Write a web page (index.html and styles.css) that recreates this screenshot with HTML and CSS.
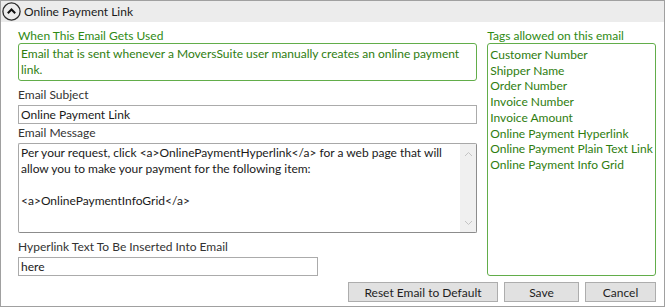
FILE: index.html
```
<html lang="en">
<head>
  <meta charset="UTF-8" />
  <title>Online Payment Link</title>
  <link rel="stylesheet" href="styles.css">
</head>
<body>

<div class="panel">
  <div class="panel_header">
    <span class="toggle">
      <svg width="19" height="19" viewBox="0 0 19 19">
        <circle cx="9.5" cy="9.5" r="8.6" fill="none" stroke="#2a2a2a" stroke-width="1.3"/>
        <path d="M5.8 11.2 L9.5 7.5 L13.2 11.2" fill="none" stroke="#111" stroke-width="2"/>
      </svg>
    </span>
    <span class="header_title">Online Payment Link</span>
  </div>

  <div class="panel_body">
    <div class="columns">
      <div class="left_col">
        <div class="green_label">When This Email Gets Used</div>
        <div class="green_box usage_box">Email that is sent whenever a MoversSuite user manually creates an online payment<br>link.</div>

        <div class="field_label">Email Subject</div>
        <div class="text_input">Online Payment Link</div>

        <div class="field_label msg_label">Email Message</div>
        <div class="text_area">
          <div class="text_area_content">Per your request, click &lt;a&gt;OnlinePaymentHyperlink&lt;/a&gt; for a web page that will<br>allow you to make your payment for the following item:<br><br>&lt;a&gt;OnlinePaymentInfoGrid&lt;/a&gt;</div>
          <div class="scrollbar">
            <svg width="9" height="6" viewBox="0 0 9 6"><path d="M1 5 L4.5 1.5 L8 5" fill="none" stroke="#c4c4c4" stroke-width="1"/></svg>
            <svg width="9" height="6" viewBox="0 0 9 6"><path d="M1 1 L4.5 4.5 L8 1" fill="none" stroke="#c4c4c4" stroke-width="1"/></svg>
          </div>
        </div>

        <div class="field_label">Hyperlink Text To Be Inserted Into Email</div>
        <div class="text_input short_input">here</div>
      </div>

      <div class="right_col">
        <div class="green_label">Tags allowed on this email</div>
        <div class="green_box tags_box">
          <div>Customer Number</div>
          <div>Shipper Name</div>
          <div>Order Number</div>
          <div>Invoice Number</div>
          <div>Invoice Amount</div>
          <div>Online Payment Hyperlink</div>
          <div>Online Payment Plain Text Link</div>
          <div>Online Payment Info Grid</div>
        </div>
      </div>
    </div>

    <div class="actions">
      <button class="btn btn_reset">Reset Email to Default</button>
      <button class="btn btn_save">Save</button>
      <button class="btn btn_cancel">Cancel</button>
    </div>
  </div>
</div>

</body>
</html>
```

FILE: styles.css
```
*{box-sizing:border-box; margin:0; padding:0;}
body{width:665px; height:308px; background:#fff; color:#1e1e1e;
     font-family:Lato, "Noto Sans", sans-serif; font-size:12px;}

.panel{height:307px; border:1px solid #a0a0a0; display:flex; flex-direction:column;}
.panel_header{height:21px; background:#ececec; display:flex; align-items:center; padding-left:1px;}
.toggle{width:19px; height:19px; display:flex; margin-right:3px;}
.header_title{font-size:12px; color:#1a1a1a;}

.panel_body{flex:1; display:flex; flex-direction:column; padding:6px 8px 0 17px;}
.columns{display:flex; gap:10px; height:248px;}
.left_col{width:460px; display:flex; flex-direction:column;}
.right_col{width:169px; display:flex; flex-direction:column;}

.green_label{height:15px; line-height:15px; color:#2f8a14; white-space:nowrap;}
.green_box{border:1px solid #62ad4a; border-radius:3px; color:#2f7d10;}
.usage_box{height:38px; padding:2px 2px; line-height:16px; white-space:nowrap;}
.tags_box{flex:1; padding:3px 2px; line-height:15.7px; white-space:nowrap;}

.field_label{height:16px; line-height:16px; margin-top:6px; margin-bottom:2px; color:#333;}
.msg_label{margin-top:1px;}

.text_input{height:19px; line-height:17px; border:1px solid #ababab; padding:0 2px; color:#1a1a1a;}
.short_input{width:300px;}

.text_area{height:90px; display:flex; border:1px solid #a8a8a8; border-right-color:#8c8c8c;
           border-bottom-color:#8c8c8c; border-radius:2px;}
.text_area_content{flex:1; padding:1px 2px; line-height:16px; white-space:nowrap; color:#1a1a1a;}
.scrollbar{width:16px; background:#f0f0f0; display:flex; flex-direction:column;
           justify-content:space-between; align-items:center; padding:7px 0 6px;}

.actions{display:flex; justify-content:flex-end; gap:6px; margin-top:6px;}
.btn{height:20px; background:#e1e1e1; border:1px solid #adadad; font-family:inherit;
     font-size:12px; color:#1e1e1e;}
.btn_reset{width:150px;}
.btn_save{width:75px;}
.btn_cancel{width:71px;}
```
